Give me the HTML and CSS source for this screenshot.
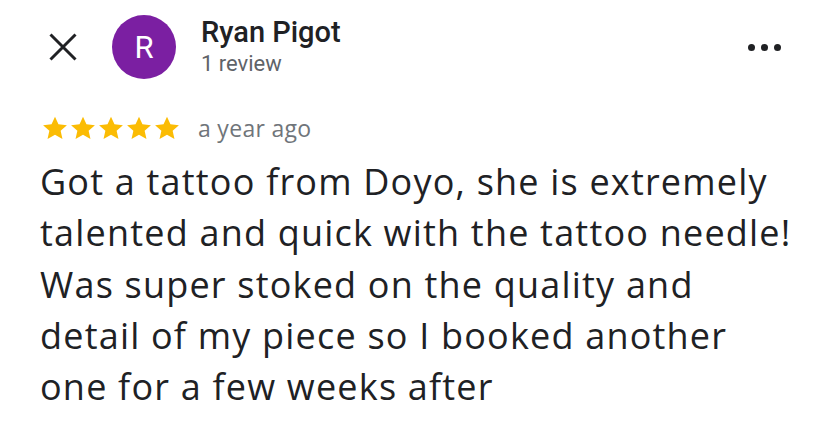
FILE: index.html
```html
<!DOCTYPE html>
<html lang="en">
<head>
    <meta charset="UTF-8">
    <meta name="viewport" content="width=device-width, initial-scale=1.0">
    <title>Review - Ryan Pigot</title>
    <link rel="stylesheet" href="styles.css">
</head>
<body>
    <div class="review">
        <div class="review-head">
            <button class="close-btn" aria-label="Close">
                <svg width="28" height="28" viewBox="0 0 28 28">
                    <path d="M1.5 1.5 L26.5 26.5 M26.5 1.5 L1.5 26.5" stroke="#202124" stroke-width="3" fill="none"/>
                </svg>
            </button>
            <div class="avatar">R</div>
            <div class="author">
                <div class="author-name">Ryan Pigot</div>
                <div class="author-meta">1 review</div>
            </div>
            <button class="more-btn" aria-label="More">
                <span class="dot"></span><span class="dot"></span><span class="dot"></span>
            </button>
        </div>

        <div class="rating">
            <div class="stars">
                <svg viewBox="0 0 24 24"><path d="M12 1.5l3.2 7.1 7.8.8-5.8 5.2 1.7 7.6L12 18.3l-6.9 3.9 1.7-7.6L1 9.4l7.8-.8z"/></svg>
                <svg viewBox="0 0 24 24"><path d="M12 1.5l3.2 7.1 7.8.8-5.8 5.2 1.7 7.6L12 18.3l-6.9 3.9 1.7-7.6L1 9.4l7.8-.8z"/></svg>
                <svg viewBox="0 0 24 24"><path d="M12 1.5l3.2 7.1 7.8.8-5.8 5.2 1.7 7.6L12 18.3l-6.9 3.9 1.7-7.6L1 9.4l7.8-.8z"/></svg>
                <svg viewBox="0 0 24 24"><path d="M12 1.5l3.2 7.1 7.8.8-5.8 5.2 1.7 7.6L12 18.3l-6.9 3.9 1.7-7.6L1 9.4l7.8-.8z"/></svg>
                <svg viewBox="0 0 24 24"><path d="M12 1.5l3.2 7.1 7.8.8-5.8 5.2 1.7 7.6L12 18.3l-6.9 3.9 1.7-7.6L1 9.4l7.8-.8z"/></svg>
            </div>
            <span class="date">a year ago</span>
        </div>

        <p class="review-text">Got a tattoo from Doyo, she is extremely talented and quick with the tattoo needle! Was super stoked on the quality and detail of my piece so I booked another one for a few weeks after</p>
    </div>
</body>
</html>
```

FILE: styles.css
```css
* {
    margin: 0;
    padding: 0;
    box-sizing: border-box;
}
body {
    font-family: "Open Sans", Arial, sans-serif;
    background: #ffffff;
    color: #202124;
    width: 828px;
    height: 436px;
    overflow: hidden;
}
.review {
    padding: 16px 40px 0 40px;
}
.review-head {
    display: flex;
    align-items: center;
    height: 62px;
}
.close-btn {
    width: 48px;
    height: 48px;
    margin-left: -1px;
    background: none;
    border: none;
    display: flex;
    align-items: center;
    justify-content: center;
}
.avatar {
    width: 64px;
    height: 64px;
    margin-left: 25px;
    border-radius: 50%;
    background: #7b1fa2;
    color: #ffffff;
    font-family: Roboto, Arial, sans-serif;
    font-size: 31px;
    display: flex;
    align-items: center;
    justify-content: center;
}
.author {
    flex: 1;
    margin-left: 25px;
    font-family: Roboto, Arial, sans-serif;
}
.author-name {
    font-size: 29px;
    font-weight: 500;
    line-height: 34px;
    color: #202124;
}
.author-meta {
    font-size: 22px;
    line-height: 30px;
    color: #5f6368;
}
.more-btn {
    display: flex;
    gap: 6px;
    background: none;
    border: none;
    margin-right: 7px;
}
.dot {
    width: 7px;
    height: 7px;
    border-radius: 50%;
    background: #202124;
}
.rating {
    display: flex;
    align-items: center;
    margin-top: 36px;
    height: 28px;
}
.stars {
    display: flex;
    gap: 2px;
    margin-left: 2px;
}
.stars svg {
    width: 26px;
    height: 26px;
    fill: #fbbc04;
}
.date {
    margin-left: 18px;
    font-size: 23px;
    letter-spacing: 0.3px;
    color: #70757a;
}
.review-text {
    margin-top: 14px;
    font-size: 36px;
    line-height: 51.3px;
    letter-spacing: 1.2px;
    color: #202124;
    width: 760px;
}
```
